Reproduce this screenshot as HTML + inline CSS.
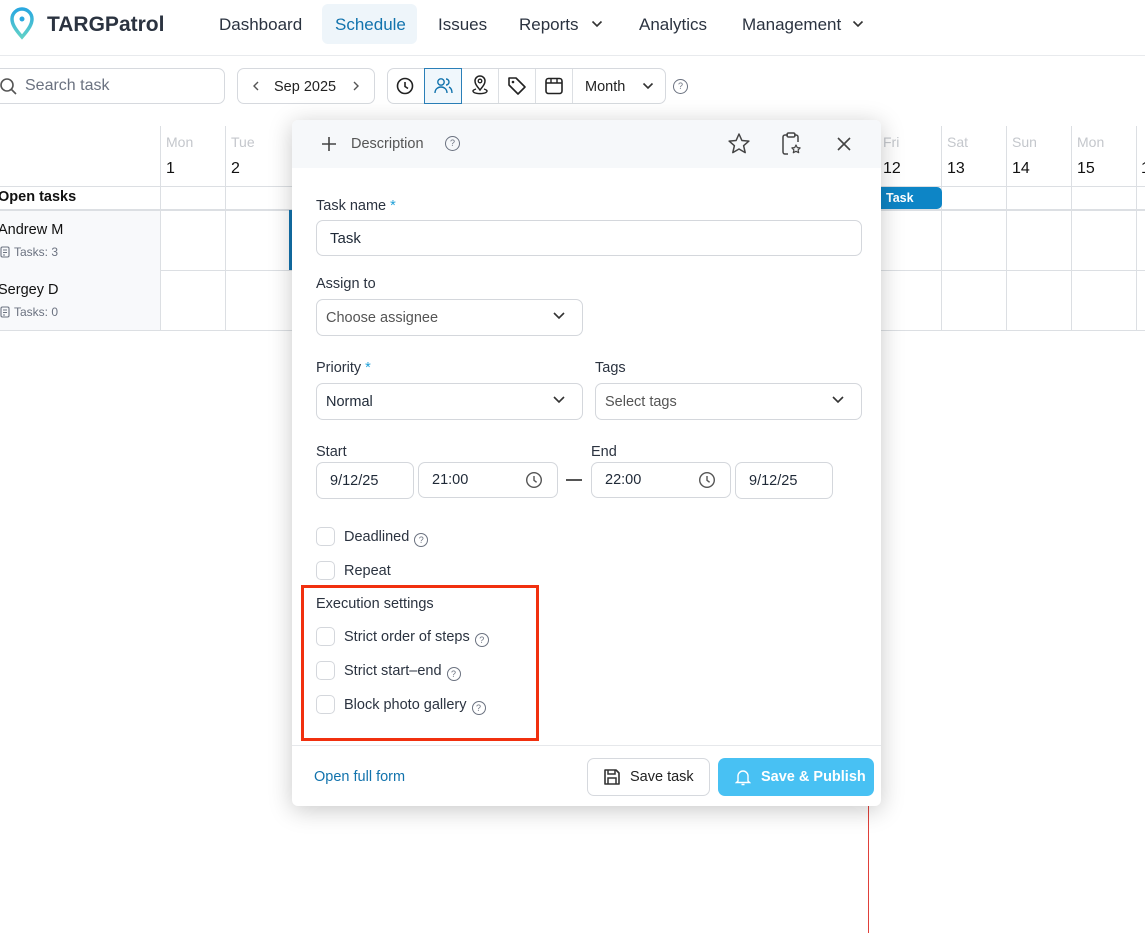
<!DOCTYPE html>
<html><head><meta charset="utf-8"><style>
*{box-sizing:border-box;margin:0;padding:0}
body{width:1145px;height:933px;overflow:hidden;background:#fff;font-family:"Liberation Sans",sans-serif;color:#1f2937;position:relative}
.abs{position:absolute}
.nav{font-size:17px;color:#2b3340}
.btn{position:absolute;border:1px solid #d6d9de;border-radius:7px;background:#fff}
.vl{position:absolute;width:1px;background:#dcdfe3}
.hl{position:absolute;height:1px;background:#dcdfe3}
.lbl{position:absolute;font-size:14.5px;color:#2b3340}
.inp{position:absolute;border:1px solid #d4d7dc;border-radius:7px;background:#fff;font-size:14.5px;color:#1f2937;padding-left:13px;display:flex;align-items:center}
.cb{position:absolute;width:19px;height:19px;border:1px solid #d4d7dc;border-radius:5px;background:#fff}
.ct{position:absolute;font-size:14.5px;color:#2b3340}
.q{display:inline-block;width:14px;height:14px;border:1.3px solid #6b7280;border-radius:50%;font-size:9px;text-align:center;line-height:12px;color:#6b7280;vertical-align:-2px;margin-left:5px}
</style></head><body>
<svg class="abs" style="left:9px;top:7px" width="26" height="33" viewBox="0 0 26 33"><defs><linearGradient id="g" x1="0" y1="0" x2="0" y2="1"><stop offset="0" stop-color="#2aa8e0"/><stop offset="1" stop-color="#5fd0c8"/></linearGradient></defs><path d="M13 30 C6 22 3 17 3 12 A10 10 0 0 1 23 12 C23 17 20 22 13 30Z" fill="none" stroke="url(#g)" stroke-width="3.5"/><circle cx="13" cy="12" r="2.5" fill="#2aa8e0"/></svg>
<div class="abs" style="left:47px;top:13px;font-size:21px;font-weight:bold;color:#2b3340">TARGPatrol</div>
<div class="abs nav" style="left:219px;top:15px">Dashboard</div>
<div class="abs" style="left:322px;top:4px;width:95px;height:40px;background:#eef5fa;border-radius:6px"></div>
<div class="abs nav" style="left:335px;top:15px;color:#1273ad">Schedule</div>
<div class="abs nav" style="left:438px;top:15px">Issues</div>
<div class="abs nav" style="left:519px;top:15px">Reports</div>
<svg class="abs" style="left:591px;top:19px" width="12" height="10"><path d="M1.5 2.5l4.5 4.5 4.5-4.5" fill="none" stroke="#333" stroke-width="1.6"/></svg>
<div class="abs nav" style="left:639px;top:15px">Analytics</div>
<div class="abs nav" style="left:742px;top:15px">Management</div>
<svg class="abs" style="left:852px;top:19px" width="12" height="10"><path d="M1.5 2.5l4.5 4.5 4.5-4.5" fill="none" stroke="#333" stroke-width="1.6"/></svg>
<div class="hl" style="left:0;top:55px;width:1145px;background:#e8eaed"></div>
<div class="btn" style="left:-10px;top:68px;width:235px;height:36px"></div>
<svg class="abs" style="left:0;top:77px" width="18" height="18"><circle cx="7" cy="8" r="6" fill="none" stroke="#555" stroke-width="1.6"/><path d="M11.5 12.5 16 17" stroke="#555" stroke-width="1.6"/></svg>
<div class="abs" style="left:25px;top:77px;font-size:16px;color:#6b7280">Search task</div>
<div class="btn" style="left:237px;top:68px;width:138px;height:36px"></div>
<svg class="abs" style="left:252px;top:81px" width="8" height="10"><path d="M6 1 2 5l4 4" fill="none" stroke="#555" stroke-width="1.4"/></svg>
<div class="abs" style="left:274px;top:79px;font-size:14.5px;color:#222">Sep 2025</div>
<svg class="abs" style="left:352px;top:81px" width="8" height="10"><path d="M2 1l4 4-4 4" fill="none" stroke="#555" stroke-width="1.4"/></svg>
<div class="btn" style="left:387px;top:68px;width:279px;height:36px"></div>
<div class="vl" style="left:424px;top:69px;height:34px"></div>
<div class="vl" style="left:461px;top:69px;height:34px"></div>
<div class="vl" style="left:498px;top:69px;height:34px"></div>
<div class="vl" style="left:535px;top:69px;height:34px"></div>
<div class="vl" style="left:572px;top:69px;height:34px"></div>
<div class="abs" style="left:424px;top:68px;width:38px;height:36px;border:1px solid #2a7fb8;background:#f0f7fc"></div>
<svg class="abs" style="left:396px;top:77px" width="18" height="18"><circle cx="9" cy="9" r="7.5" fill="none" stroke="#222" stroke-width="1.6"/><path d="M9 5v4.5l3 2" fill="none" stroke="#222" stroke-width="1.6"/></svg>
<svg class="abs" style="left:433px;top:77px" width="20" height="18"><circle cx="8" cy="5" r="3.2" fill="none" stroke="#1273ad" stroke-width="1.4"/><path d="M2 16c0-4 3-6 6-6s6 2 6 6M13 2a3 3 0 0 1 0 6M16 10c2 1 3 3 3 6" fill="none" stroke="#1273ad" stroke-width="1.4"/></svg>
<svg class="abs" style="left:470px;top:75px" width="20" height="20"><path d="M10 15c-3-4-5-6-5-9a5 5 0 0 1 10 0c0 3-2 5-5 9z" fill="none" stroke="#222" stroke-width="1.5"/><circle cx="10" cy="6" r="1.8" fill="none" stroke="#222" stroke-width="1.3"/><path d="M6 14c-3 1-4 2-2 3.5 3 1.5 9 1.5 12 0 2-1.5 1-2.5-2-3.5" fill="none" stroke="#222" stroke-width="1.4"/></svg>
<svg class="abs" style="left:507px;top:76px" width="20" height="20"><path d="M2 2h7l9 9-7 7-9-9z" fill="none" stroke="#222" stroke-width="1.6" stroke-linejoin="round"/><circle cx="6" cy="6" r="1.3" fill="#222"/></svg>
<svg class="abs" style="left:544px;top:77px" width="20" height="18"><rect x="2" y="1.5" width="16" height="15" rx="2.5" fill="none" stroke="#222" stroke-width="1.6"/><path d="M2 6h16M7 1.5v4.5M13 1.5v4.5" stroke="#222" stroke-width="1.4"/></svg>
<div class="abs" style="left:585px;top:79px;font-size:14.5px;color:#222">Month</div>
<svg class="abs" style="left:642px;top:81px" width="12" height="10"><path d="M1.5 2.5l4.5 4.5 4.5-4.5" fill="none" stroke="#333" stroke-width="1.6"/></svg>
<div class="abs" style="left:673px;top:79px;width:15px;height:15px;border:1.3px solid #6b7280;border-radius:50%;font-size:9px;text-align:center;line-height:13px;color:#6b7280">?</div>
<div class="hl" style="left:0;top:186px;width:1145px"></div>
<div class="hl" style="left:0;top:209px;width:1145px;height:2px"></div>
<div class="hl" style="left:0;top:270px;width:1145px"></div>
<div class="hl" style="left:0;top:330px;width:1145px"></div>
<div class="abs" style="left:0;top:211px;width:160px;height:119px;background:#f8f9fb"></div>
<div class="vl" style="left:160px;top:126px;height:204px"></div>
<div class="vl" style="left:225px;top:126px;height:204px"></div>
<div class="vl" style="left:941px;top:126px;height:204px"></div>
<div class="vl" style="left:1006px;top:126px;height:204px"></div>
<div class="vl" style="left:1071px;top:126px;height:204px"></div>
<div class="vl" style="left:1136px;top:126px;height:204px"></div>
<div class="abs" style="left:166px;top:134px;font-size:14px;color:#c4c7cc">Mon</div><div class="abs" style="left:166px;top:160px;font-size:16px;color:#111">1</div>
<div class="abs" style="left:231px;top:134px;font-size:14px;color:#c4c7cc">Tue</div><div class="abs" style="left:231px;top:160px;font-size:16px;color:#111">2</div>
<div class="abs" style="left:883px;top:134px;font-size:14px;color:#c4c7cc">Fri</div><div class="abs" style="left:883px;top:160px;font-size:16px;color:#111">12</div>
<div class="abs" style="left:947px;top:134px;font-size:14px;color:#c4c7cc">Sat</div><div class="abs" style="left:947px;top:160px;font-size:16px;color:#111">13</div>
<div class="abs" style="left:1012px;top:134px;font-size:14px;color:#c4c7cc">Sun</div><div class="abs" style="left:1012px;top:160px;font-size:16px;color:#111">14</div>
<div class="abs" style="left:1077px;top:134px;font-size:14px;color:#c4c7cc">Mon</div><div class="abs" style="left:1077px;top:160px;font-size:16px;color:#111">15</div>
<div class="abs" style="left:1141px;top:160px;font-size:16px;color:#111">1</div>
<div class="abs" style="left:870px;top:187px;width:72px;height:22px;background:#0d85c6;border-radius:0 5px 5px 0"></div>
<div class="abs" style="left:886px;top:191px;font-size:12.5px;font-weight:bold;color:#fff">Task</div>
<div class="abs" style="left:-2px;top:189px;font-size:14.5px;font-weight:bold;color:#111">Open tasks</div>
<div class="abs" style="left:-2px;top:222px;font-size:14.5px;color:#111">Andrew M</div>
<svg class="abs" style="left:0;top:246px" width="10" height="12"><rect x="1" y="1" width="8" height="10" rx="1.5" fill="none" stroke="#6b7280" stroke-width="1.1"/><path d="M3 4h4M3 6.5h4M3 9h2" stroke="#6b7280" stroke-width="1"/></svg>
<div class="abs" style="left:14px;top:245px;font-size:12px;color:#6b7280">Tasks: 3</div>
<div class="abs" style="left:-2px;top:282px;font-size:14.5px;color:#111">Sergey D</div>
<svg class="abs" style="left:0;top:306px" width="10" height="12"><rect x="1" y="1" width="8" height="10" rx="1.5" fill="none" stroke="#6b7280" stroke-width="1.1"/><path d="M3 4h4M3 6.5h4M3 9h2" stroke="#6b7280" stroke-width="1"/></svg>
<div class="abs" style="left:14px;top:305px;font-size:12px;color:#6b7280">Tasks: 0</div>
<div class="abs" style="left:289px;top:210px;width:3px;height:60px;background:#1273ad"></div>
<div class="abs" style="left:868px;top:806px;width:1px;height:127px;background:#e0403a"></div>
<div class="abs" style="left:292px;top:120px;width:589px;height:686px;background:#fff;border-radius:6px;box-shadow:0 4px 24px rgba(0,0,0,.22)"></div>
<div class="abs" style="left:292px;top:120px;width:589px;height:48px;background:#f6f8fa;border-radius:6px 6px 0 0"></div>
<svg class="abs" style="left:321px;top:136px" width="16" height="16"><path d="M8 1v14M1 8h14" stroke="#444" stroke-width="1.6"/></svg>
<div class="abs" style="left:351px;top:136px;font-size:14.5px;color:#555">Description</div>
<div class="abs" style="left:445px;top:136px;width:15px;height:15px;border:1.3px solid #6b7280;border-radius:50%;font-size:9px;text-align:center;line-height:13px;color:#6b7280">?</div>
<svg class="abs" style="left:727px;top:132px" width="24" height="24"><path d="M12 2l2.9 6.5 7 .6-5.3 4.6 1.6 6.9L12 17l-6.2 3.6 1.6-6.9L2.1 9.1l7-.6z" fill="none" stroke="#444" stroke-width="1.5" stroke-linejoin="round"/></svg>
<svg class="abs" style="left:780px;top:131px" width="24" height="26"><path d="M8 4H5a2 2 0 0 0-2 2v15a2 2 0 0 0 2 2h3M14 4h2a2 2 0 0 1 2 2v5" fill="none" stroke="#444" stroke-width="1.5"/><rect x="7" y="2" width="8" height="4" rx="1.5" fill="none" stroke="#444" stroke-width="1.5"/><path d="M16 14l1.3 2.6 2.8.3-2 2 .6 2.8-2.7-1.4-2.7 1.4.6-2.8-2-2 2.8-.3z" fill="none" stroke="#444" stroke-width="1.2" stroke-linejoin="round"/></svg>
<svg class="abs" style="left:836px;top:136px" width="16" height="16"><path d="M2 2l12 12M14 2 2 14" stroke="#444" stroke-width="1.6"/></svg>
<div class="lbl" style="left:316px;top:198px">Task name <span style="color:#1e9fd8">*</span></div>
<div class="inp" style="left:316px;top:220px;width:546px;height:36px;font-size:15px">Task</div>
<div class="lbl" style="left:316px;top:276px">Assign to</div>
<div class="inp" style="left:316px;top:299px;width:267px;height:37px;color:#555;padding-left:9px">Choose assignee</div>
<svg class="abs" style="left:552px;top:311px" width="14" height="10"><path d="M2 2l5 5 5-5" fill="none" stroke="#333" stroke-width="1.6"/></svg>
<div class="lbl" style="left:316px;top:360px">Priority <span style="color:#1e9fd8">*</span></div>
<div class="inp" style="left:316px;top:383px;width:267px;height:37px;padding-left:9px">Normal</div>
<svg class="abs" style="left:552px;top:395px" width="14" height="10"><path d="M2 2l5 5 5-5" fill="none" stroke="#333" stroke-width="1.6"/></svg>
<div class="lbl" style="left:595px;top:360px">Tags</div>
<div class="inp" style="left:595px;top:383px;width:267px;height:37px;padding-left:9px;color:#555">Select tags</div>
<svg class="abs" style="left:831px;top:395px" width="14" height="10"><path d="M2 2l5 5 5-5" fill="none" stroke="#333" stroke-width="1.6"/></svg>
<div class="lbl" style="left:316px;top:444px">Start</div>
<div class="lbl" style="left:591px;top:444px">End</div>
<div class="inp" style="left:316px;top:462px;width:98px;height:37px">9/12/25</div>
<div class="inp" style="left:418px;top:462px;width:140px;height:36px">21:00</div>
<svg class="abs" style="left:525px;top:471px" width="18" height="18"><circle cx="9" cy="9" r="7.3" fill="none" stroke="#555" stroke-width="1.4"/><path d="M9 5v4.3l2.6 2" fill="none" stroke="#555" stroke-width="1.4"/></svg>
<div class="abs" style="left:566px;top:479px;width:16px;height:2px;background:#555"></div>
<div class="inp" style="left:591px;top:462px;width:140px;height:36px">22:00</div>
<svg class="abs" style="left:698px;top:471px" width="18" height="18"><circle cx="9" cy="9" r="7.3" fill="none" stroke="#555" stroke-width="1.4"/><path d="M9 5v4.3l2.6 2" fill="none" stroke="#555" stroke-width="1.4"/></svg>
<div class="inp" style="left:735px;top:462px;width:98px;height:37px">9/12/25</div>
<div class="cb" style="left:316px;top:527px"></div><div class="ct" style="left:344px;top:529px">Deadlined<span class="q">?</span></div>
<div class="cb" style="left:316px;top:561px"></div><div class="ct" style="left:344px;top:563px">Repeat</div>
<div class="abs" style="left:301px;top:585px;width:238px;height:156px;border:3px solid #f1300f"></div>
<div class="ct" style="left:316px;top:596px;font-size:14.5px">Execution settings</div>
<div class="cb" style="left:316px;top:627px"></div><div class="ct" style="left:344px;top:629px">Strict order of steps<span class="q">?</span></div>
<div class="cb" style="left:316px;top:661px"></div><div class="ct" style="left:344px;top:663px">Strict start–end<span class="q">?</span></div>
<div class="cb" style="left:316px;top:695px"></div><div class="ct" style="left:344px;top:697px">Block photo gallery<span class="q">?</span></div>
<div class="hl" style="left:292px;top:745px;width:589px;background:#e6e8eb"></div>
<div class="abs" style="left:314px;top:769px;font-size:14.5px;color:#1273ad">Open full form</div>
<div class="btn" style="left:587px;top:758px;width:123px;height:38px"></div>
<svg class="abs" style="left:602px;top:767px" width="20" height="20"><path d="M3 3h11l3 3v11H3z" fill="none" stroke="#333" stroke-width="1.6" stroke-linejoin="round"/><path d="M6 3v4h7V3M6 17v-6h8v6" fill="none" stroke="#333" stroke-width="1.5"/></svg>
<div class="abs" style="left:630px;top:769px;font-size:14.5px;color:#222">Save task</div>
<div class="abs" style="left:718px;top:758px;width:156px;height:38px;background:#48c1f3;border-radius:7px"></div>
<svg class="abs" style="left:735px;top:768px" width="16" height="18"><path d="M3 13V8a5 5 0 0 1 10 0v5l1.5 1.5h-13zM6.5 16.5h3" fill="none" stroke="#fff" stroke-width="1.4"/></svg>
<div class="abs" style="left:761px;top:769px;font-size:14.5px;font-weight:bold;color:#fff">Save &amp; Publish</div>
</body></html>
